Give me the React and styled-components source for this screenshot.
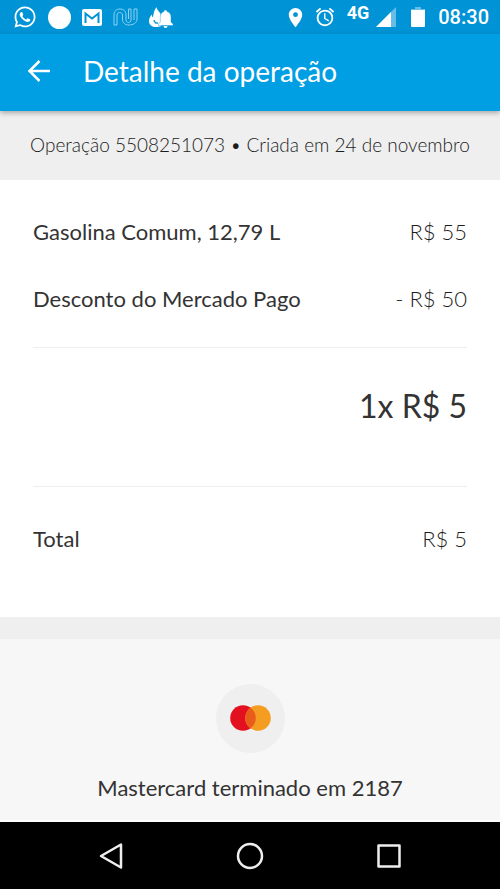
import React from 'react'
import styled, { createGlobalStyle } from 'styled-components'
import { FaWhatsapp } from 'react-icons/fa'
import { MdPlace, MdAlarm } from 'react-icons/md'

const colors = {
    Primary: '#009ee3',
    PrimaryDark: '#0093d6',
    GreyLight01: '#f7f7f7',
    GreyLight02: '#efefef',
    GreyDark01: '#333333',
    GreyDark02: '#1c1c1c',
}

const GlobalStyle = createGlobalStyle`
    *, *::before, *::after{
        box-sizing: border-box;
    }
    body{
        margin: 0;
        font-family: Lato, "Open Sans", sans-serif;
        color: ${colors.GreyDark01};
        background-color: ${colors.GreyLight01};
    }
    svg{
        display: block;
    }
`

const Screen = styled.div`
    display: flex;
    flex-direction: column;
    min-height: 100vh;
`

const StatusBar = styled.div`
    display: flex;
    justify-content: space-between;
    align-items: center;
    height: 34px;
    padding: 0 11px 0 13px;
    color: #fff;
    background-color: ${colors.PrimaryDark};
`

const StatusGroup = styled.div`
    display: flex;
    align-items: center;
    gap: ${props => props.$gap};
`

const Network = styled.span`
    align-self: flex-start;
    margin-left: 4px;
    font-family: Roboto, sans-serif;
    font-size: 18px;
    font-weight: 700;
    line-height: 16px;
`

const Power = styled.div`
    display: flex;
    align-items: center;
    gap: 13px;
    margin-left: 8px;
`

const Clock = styled.span`
    font-family: Roboto, sans-serif;
    font-size: 20px;
    font-weight: 500;
    line-height: 24px;
`

const Header = styled.header`
    display: flex;
    align-items: center;
    gap: 32px;
    height: 77px;
    padding: 0 27px 3px;
    color: #fff;
    background-color: ${colors.Primary};
    box-shadow: 0 2px 5px rgba(0, 0, 0, .3);
    z-index: 1;
`

const BackButton = styled.button`
    padding: 0;
    border: none;
    color: inherit;
    background: none;
    cursor: pointer;
`

const Title = styled.h1`
    margin: 0;
    font-size: 28px;
    font-weight: 400;
    line-height: 36px;
`

const OperationInfo = styled.p`
    margin: 0;
    padding: 20px 12px 21px;
    font-size: 19px;
    font-weight: 300;
    line-height: 28px;
    text-align: center;
    color: ${colors.GreyDark02};
    background-color: ${colors.GreyLight02};
`

const Summary = styled.main`
    padding: 0 33px;
    background-color: #fff;
`

const Items = styled.div`
    padding: ${props => props.$last ? '18px 0 45px' : '18px 0 15px'};
`

const Item = styled.div`
    display: flex;
    justify-content: space-between;
    align-items: center;
    height: 67px;
    font-size: 22px;
    line-height: 28px;
`

const Amount = styled.span`
    font-weight: 300;
    color: ${colors.GreyDark02};
`

const Installments = styled.div`
    padding: 38px 0 60px;
    border: solid #eee;
    border-width: 1px 0;
    font-size: 32px;
    line-height: 40px;
    text-align: right;
`

const PaymentMethod = styled.section`
    display: flex;
    flex-direction: column;
    align-items: center;
    flex: 1;
    gap: 21px;
    padding: 45px 20px 18px;
    border-top: 22px solid ${colors.GreyLight02};
    border-bottom: 2px solid #fff;
    font-size: 22px;
    line-height: 28px;
    background-color: ${colors.GreyLight01};
`

const CardBadge = styled.div`
    display: grid;
    place-items: center;
    width: 69px;
    height: 69px;
    border-radius: 50%;
    background-color: ${colors.GreyLight02};
`

const NavBar = styled.nav`
    display: flex;
    justify-content: space-between;
    align-items: center;
    height: 67px;
    padding: 0 98px;
    background-color: #000;
`

const NavButton = styled.button`
    padding: 0;
    border: none;
    color: #eee;
    background: none;
    cursor: pointer;
`

const MailIcon = () => (
    <svg width="20" height="17" viewBox="0 0 20 17">
        <rect width="20" height="17" rx="2" fill="#fff" />
        <path d="M3.500 14V4.500L10 9.500l6.500-5V14" fill="none" stroke={colors.PrimaryDark} strokeWidth="2" />
    </svg>
)

const NuIcon = () => (
    <svg width="25" height="18" viewBox="0 0 25 18" fill="none" stroke="#8fd2f2" strokeWidth="1">
        <path d="M1 17V7c0-4 2.500-6 6-6s6 2 6 6v5c0 1.500 1 2.500 2.500 2.500S18 13.500 18 12V1h-2.500v10" />
        <path d="M1 17h3V7c0-1.500 1-2.500 2.500-2.500S9.500 5.500 9.500 7v4c0 4 2.500 6 6.500 6s8-2 8-6V1h-3v11" />
    </svg>
)

const FlameBellIcon = () => (
    <svg width="24" height="21" viewBox="0 0 24 21" fill="#fff">
        <path d="M7.500 0c-.3 3 4.500 5 4.500 9v10c-1 .7-3.500 1-5.500 1C2.500 20 0 17.500 0 14c0-3 1.500-5 3-6.500 0 1.500.3 2.500 1 3C4.500 7 5 3 7.500 0z" />
        <path d="M5 13c.3 2.500 2 3.500 4 3" fill="none" stroke={colors.PrimaryDark} strokeWidth="1.300" />
        <path d="M16.500 3c.9 0 1.500.6 1.500 1.500 2.600.7 4 2.700 4 5.500v5l2 2v1.500H9.500V17l1.800-2v-5c0-2.800 1.200-4.800 3.700-5.500 0-.9.600-1.500 1.500-1.500z" stroke={colors.PrimaryDark} strokeWidth=".4" />
        <path d="M14.500 19h4a2 2 0 0 1-4 0z" />
    </svg>
)

const SignalIcon = () => (
    <svg width="20" height="20" viewBox="0 0 20 20">
        <path d="M0 20L20 0v20z" fill="#fff" opacity=".4" />
        <path d="M0 20L15 5v15z" fill="#fff" />
    </svg>
)

const BatteryIcon = () => (
    <svg width="14" height="20" viewBox="0 0 14 20" fill="#fff">
        <path d="M4 0h6v2h4v1H0V2h4z" opacity=".4" />
        <path d="M0 3h14v16a1 1 0 0 1-1 1H1a1 1 0 0 1-1-1z" />
    </svg>
)

const ArrowIcon = () => (
    <svg width="24" height="24" viewBox="0 0 24 24" fill="none" stroke="currentColor" strokeWidth="2.500">
        <path d="M23 12H3M12.500 2L2.500 12l10 10" />
    </svg>
)

const MastercardLogo = () => (
    <svg width="41" height="28" viewBox="0 0 41 28">
        <circle cx="13" cy="13" r="12.800" fill="#e3101f" />
        <circle cx="28" cy="13" r="12.800" fill="#f49d20" />
        <path d="M20.500 2.630a12.800 12.800 0 0 1 0 20.740a12.800 12.800 0 0 1 0-20.740z" fill="#e95d1b" />
    </svg>
)

const App = () => (
    <>
        <GlobalStyle />
        <Screen>
            <StatusBar>
                <StatusGroup $gap="11px">
                    <FaWhatsapp size={24} />
                    <svg width="23" height="23" viewBox="0 0 23 23">
                        <circle cx="11.500" cy="11.500" r="11.500" fill="#fff" />
                    </svg>
                    <MailIcon />
                    <NuIcon />
                    <FlameBellIcon />
                </StatusGroup>
                <StatusGroup $gap="7px">
                    <MdPlace size={23} />
                    <MdAlarm size={22} />
                    <Network>4G</Network>
                    <SignalIcon />
                    <Power>
                        <BatteryIcon />
                        <Clock>08:30</Clock>
                    </Power>
                </StatusGroup>
            </StatusBar>
            <Header>
                <BackButton aria-label="Voltar"><ArrowIcon /></BackButton>
                <Title>Detalhe da operação</Title>
            </Header>
            <OperationInfo>Operação 5508251073 • Criada em 24 de novembro</OperationInfo>
            <Summary>
                <Items>
                    <Item>
                        <span>Gasolina Comum, 12,79 L</span>
                        <Amount>R$ 55</Amount>
                    </Item>
                    <Item>
                        <span>Desconto do Mercado Pago</span>
                        <Amount>- R$ 50</Amount>
                    </Item>
                </Items>
                <Installments>1x R$ 5</Installments>
                <Items $last>
                    <Item>
                        <span>Total</span>
                        <Amount>R$ 5</Amount>
                    </Item>
                </Items>
            </Summary>
            <PaymentMethod>
                <CardBadge><MastercardLogo /></CardBadge>
                <span>Mastercard terminado em 2187</span>
            </PaymentMethod>
            <NavBar>
                <NavButton aria-label="Voltar">
                    <svg width="26" height="28" viewBox="0 0 26 28" fill="none" stroke="currentColor" strokeWidth="2.500" strokeLinejoin="round">
                        <path d="M23 2.500v23L3 14z" />
                    </svg>
                </NavButton>
                <NavButton aria-label="Início">
                    <svg width="28" height="28" viewBox="0 0 28 28" fill="none" stroke="currentColor" strokeWidth="2.500">
                        <circle cx="14" cy="14" r="12" />
                    </svg>
                </NavButton>
                <NavButton aria-label="Recentes">
                    <svg width="26" height="26" viewBox="0 0 26 26" fill="none" stroke="currentColor" strokeWidth="2.500" strokeLinejoin="round">
                        <path d="M2.500 2.500h21v21h-21z" />
                    </svg>
                </NavButton>
            </NavBar>
        </Screen>
    </>
)

export default App
